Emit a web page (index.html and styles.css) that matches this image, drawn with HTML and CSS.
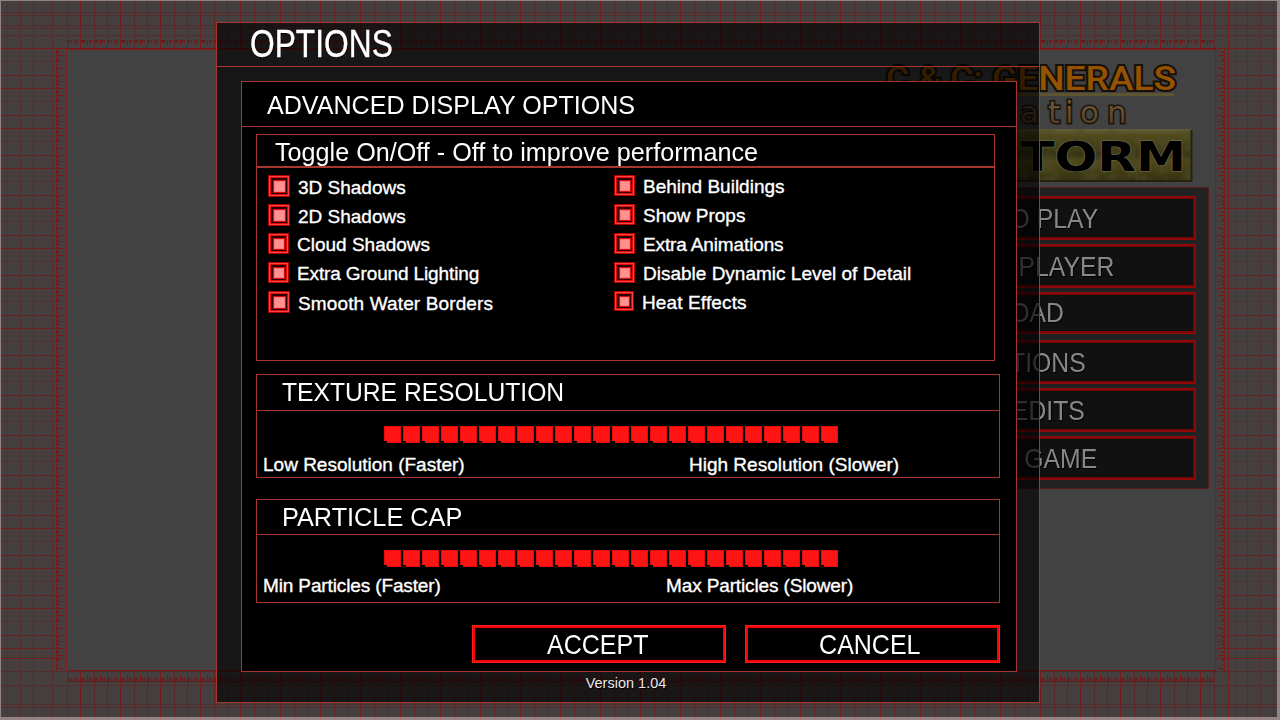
FILE: index.html
```
<!DOCTYPE html>
<html lang="en">
<head>
<meta charset="utf-8">
<title>Options</title>
<link rel="stylesheet" href="styles.css">
</head>
<body>
<svg class="backdrop" width="1280" height="720" viewBox="0 0 1280 720" shape-rendering="crispEdges">
  <defs>
    <pattern id="cols" x="80" y="0" width="40" height="720" patternUnits="userSpaceOnUse">
      <rect width="1" height="720" fill="#741b1b"/><rect x="14" width="1" height="720" fill="#572828"/><rect x="27" width="1" height="720" fill="#5a2828"/>
    </pattern>
    <pattern id="rows" x="0" y="48" width="1280" height="40" patternUnits="userSpaceOnUse">
      <rect width="1280" height="1" fill="#741b1b"/><rect y="13" width="1280" height="1" fill="#4f3232"/><rect y="27" width="1280" height="1" fill="#642424"/>
    </pattern>
    <pattern id="hticks" x="60" y="0" width="40" height="8" patternUnits="userSpaceOnUse">
      <path d="M1 0h2v3h-2zM4 0h1v3h-1zM8 0h2v3h-2zM11 0h1v3h-1zM14 0h1v5h-1zM16 0h2v3h-2zM21 0h4v3h-4zM27 0h1v5h-1zM29 0h2v3h-2zM32 0h1v3h-1zM35 0h3v3h-3z" fill="#602020"/>
      <rect x="0" width="1" height="6" fill="#8a1010"/>
    </pattern>
    <pattern id="vticks" x="0" y="68" width="8" height="40" patternUnits="userSpaceOnUse">
      <path d="M0 0h7v1H0zM0 4h3v1H0zM0 8h3v2H0zM0 12h2v1H0zM0 15h3v2H0zM0 19h3v1H0zM0 23h3v2H0zM0 27h7v1H0zM0 31h3v2H0zM0 36h3v1H0z" fill="#731818"/>
      <rect y="13" width="7" height="1" fill="#562525"/>
    </pattern>
    <linearGradient id="stone" x2="0" y2="1"><stop stop-color="#66613f"/><stop offset=".12" stop-color="#504b19"/><stop offset=".48" stop-color="#373414"/><stop offset=".6" stop-color="#4d4818"/><stop offset="1" stop-color="#333010"/></linearGradient>
    <linearGradient id="bronze" x2="0" y2="1"><stop stop-color="#7b6040"/><stop offset="1" stop-color="#4e381d"/></linearGradient>
    <filter id="grain" x="0" y="0" width="1" height="1"><feTurbulence type="fractalNoise" baseFrequency=".07" numOctaves="3" seed="4"/><feColorMatrix values="0 0 0 0 .08  0 0 0 0 .07  0 0 0 0 .02  1.8 0 0 0 -.7"/></filter>
  </defs>
  <rect width="1280" height="720" fill="#463f3f"/>
  <rect x="67" width="1148" height="720" fill="url(#cols)"/>
  <g fill="#463f3f"><rect y="48" width="67" height="672"/><rect x="1215" y="48" width="65" height="672"/></g>
  <g><rect y="48" width="67" height="601" fill="url(#rows)"/><rect x="1215" y="48" width="65" height="601" fill="url(#rows)"/></g>
  <g fill="#542c2c">
    <rect y="12" width="1280" height="1"/><rect y="15" width="1280" height="1"/><rect y="25" width="1280" height="1"/><rect y="28" width="1280" height="1"/><rect y="35" width="1280" height="1"/>
    <rect y="671" width="1280" height="1"/><rect y="685" width="1280" height="1"/><rect y="704" width="1280" height="1"/><rect y="707" width="1280" height="1"/>
    <rect x="7" width="1" height="720" opacity=".5"/><rect x="20" width="1" height="720"/><rect x="33" width="1" height="720"/><rect x="46" width="1" height="720" opacity=".3"/><rect x="52" width="1" height="720"/><rect x="67" width="1" height="48"/><rect x="67" y="672" width="1" height="48"/>
    <rect x="1235" width="1" height="720" opacity=".6"/><rect x="1247" width="1" height="720" opacity=".6"/><rect x="1260" width="1" height="720"/><rect x="1273" width="1" height="720"/>
  </g>
  <g fill="#781b1b"><rect x="1228" width="1" height="720"/><rect y="658" width="67" height="1"/><rect x="1215" y="658" width="65" height="1"/><rect y="48" width="1280" height="1"/></g>
  <rect x="67" y="39" width="1147" height="6" fill="url(#hticks)"/>
  <g transform="matrix(1 0 0 -1 0 681)"><rect x="67" width="1147" height="6" fill="url(#hticks)"/></g>
  <rect x="67" y="681" width="1147" height="1" fill="#641d1d"/>
  <g transform="translate(56)"><rect y="49" width="7" height="622" fill="url(#vticks)"/><rect y="49" width="1" height="622" fill="#741b1b"/></g>
  <g transform="matrix(-1 0 0 1 1225 0)"><rect y="49" width="7" height="622" fill="url(#vticks)"/><rect y="49" width="1" height="622" fill="#741b1b"/></g>
  <rect x="66" y="48" width="1150" height="623" fill="#424242"/>
  <path d="M66.5 670.5V49.500H1215.500V670.500" fill="none" stroke="#7b2020"/>
  <path d="M66 48.500H1216M67 670.500H1215" stroke="#781414"/>
  <path d="M0 0H1280V720H0ZM1 1V717H1277V1Z" fill="#ffdede" opacity=".43" fill-rule="evenodd"/>

  <g class="logo" shape-rendering="auto">
    <text class="logo-generals" x="886" y="90" textLength="97" lengthAdjust="spacingAndGlyphs">C &amp; C:</text>
    <text class="logo-generals" x="992" y="90" textLength="184" lengthAdjust="spacingAndGlyphs">GENERALS</text>
    <rect x="880" y="93" width="294" height="3" fill="#5c5530"/>
    <text class="logo-sub" x="1020 1048 1065 1080 1107" y="123">ation</text>
    <rect x="872" y="129" width="320" height="53" fill="url(#stone)"/>
    <rect x="872" y="129" width="320" height="53" filter="url(#grain)"/>
    <path d="M872 181H1191.500V130" fill="none" stroke="#25220d" stroke-width="2"/>
    <text class="logo-storm" x="984" y="171" textLength="202" lengthAdjust="spacingAndGlyphs">STORM</text>
  </g>
</svg>

<nav class="menu">
  <a><span>SOLO PLAY</span></a>
  <a><span>MULTIPLAYER</span></a>
  <a class="short"><span>LOAD</span></a>
  <a><span>OPTIONS</span></a>
  <a><span>CREDITS</span></a>
  <a><span>EXIT GAME</span></a>
</nav>

<main class="dialog">
  <h1><span>OPTIONS</span></h1>
  <section class="advanced">
    <h2><span>ADVANCED DISPLAY OPTIONS</span></h2>
    <div class="content">
      <section class="panel toggles">
        <h3><span>Toggle On/Off - Off to improve performance</span></h3>
        <div class="columns">
          <ul>
            <li><i class="check big"></i><span class="low in">3D Shadows</span></li>
            <li><i class="check big"></i><span class="low in">2D Shadows</span></li>
            <li><i class="check"></i><span>Cloud Shadows</span></li>
            <li><i class="check"></i><span class="tight">Extra Ground Lighting</span></li>
            <li><i class="check big"></i><span class="low loose">Smooth Water Borders</span></li>
          </ul>
          <ul>
            <li><i class="check"></i><span>Behind Buildings</span></li>
            <li><i class="check"></i><span>Show Props</span></li>
            <li><i class="check"></i><span class="tight">Extra Animations</span></li>
            <li><i class="check"></i><span>Disable Dynamic Level of Detail</span></li>
            <li><i class="check small"></i><span class="loose">Heat Effects</span></li>
          </ul>
        </div>
      </section>
      <section class="panel texture">
        <h3><span>TEXTURE RESOLUTION</span></h3>
        <div class="slider"><i></i><i></i><i></i><i></i><i></i><i></i><i></i><i></i><i></i><i></i><i></i><i></i><i></i><i></i><i></i><i></i><i></i><i></i><i></i><i></i><i></i><i></i><i></i><i></i></div>
        <div class="range"><span>Low Resolution (Faster)</span><span>High Resolution (Slower)</span></div>
      </section>
      <section class="panel particles">
        <h3><span>PARTICLE CAP</span></h3>
        <div class="slider"><i></i><i></i><i></i><i></i><i></i><i></i><i></i><i></i><i></i><i></i><i></i><i></i><i></i><i></i><i></i><i></i><i></i><i></i><i></i><i></i><i></i><i></i><i></i><i></i></div>
        <div class="range"><span class="tight">Min Particles (Faster)</span><span class="tight">Max Particles (Slower)</span></div>
      </section>
      <div class="actions"><button><span>ACCEPT</span></button><button><span>CANCEL</span></button></div>
    </div>
  </section>
  <footer>Version 1.04</footer>
</main>
</body>
</html>
```
FILE: styles.css
```
* { box-sizing: border-box; margin: 0; padding: 0; }
body { position: relative; width: 1280px; height: 720px; overflow: hidden; background: #424242; color: #fff; font-family: "Liberation Sans", Arial, sans-serif; }
span { display: inline-block; white-space: nowrap; }
h1, h2, h3 { font-weight: 400; }
h1 span, h2 span, h3 span { transform-origin: left center; }
.backdrop { display: block; }

.logo-generals { font: 500 34px Roboto, sans-serif; fill: #955200; stroke: #15110a; stroke-width: 4px; paint-order: stroke; }
.logo-sub { font: 400 31px "DejaVu Sans", sans-serif; fill: url(#bronze); stroke: #17130d; stroke-width: 3px; paint-order: stroke; }
.logo-storm { font: 700 41px "DejaVu Sans", sans-serif; fill: #000; stroke: #77755f; stroke-width: 1px; paint-order: stroke; }

.menu { position: absolute; left: 859px; top: 187px; width: 350px; height: 302px; padding: 8px 12px; display: flex; flex-direction: column; gap: 4px; background: #222; border: 1px solid #541b19; }
.menu a { height: 44px; flex: none; padding-right: 8px; border: 3px solid #7c0505; outline: 1px solid #930b0b; outline-offset: -1px; background: #111; color: #888; font-size: 28px; line-height: 39px; text-align: center; text-shadow: 1px 1px #000; }
.menu a.short { height: 42px; line-height: 36px; margin-bottom: 2px; }
.menu span { transform: scaleX(.885); }

.dialog { position: absolute; left: 216px; top: 22px; width: 824px; height: 681px; border: 1px solid #a8352f; background: rgba(0, 0, 0, .65); }
.dialog h1 { height: 44px; padding-left: 33px; border-bottom: 1px solid #a8352f; font-size: 38px; line-height: 43px; text-shadow: 1px 1px #000; -webkit-text-stroke: .4px #fff; }
.dialog h1 span { transform: scaleX(.835); }
.advanced { width: 776px; height: 591px; margin: 14px 0 0 24px; border: 1px solid #a8352f; background: #000; }
.advanced h2 { height: 45px; padding-left: 25px; border-bottom: 1px solid #a8352f; font-size: 26px; line-height: 47px; }
.advanced h2 span { transform: scaleX(.965); }
.content { padding: 7px 16px 0 14px; }
.panel { width: 744px; border: 1px solid #a8352f; }
.panel h3 { border-bottom: 1px solid #a8352f; font-size: 26px; }

.toggles { width: 739px; height: 227px; }
.toggles h3 { height: 33px; padding-left: 18px; border-bottom-width: 2px; line-height: 34px; }
.toggles h3 span { transform: scaleX(.968); }
.columns { display: grid; grid-template-columns: 346px 1fr; padding: 7px 0 0 11px; }
ul { list-style: none; }
li { display: flex; height: 29px; gap: 8px; font-size: 19px; line-height: 23px; }
li span, .range span { -webkit-text-stroke: .35px #fff; }
li .low { padding-top: 1px; }
.tight { letter-spacing: -.13px; }
.loose { letter-spacing: .13px; }
.check { display: block; flex: none; position: relative; width: 21px; height: 21px; border: solid #300000; border-width: 5px 4px 4px 5px; background: #ff9191; }
.check::before { content: ""; position: absolute; inset: -5px -4px -4px -5px; border: 1px solid #b00000; box-shadow: inset 0 0 0 1px #ff4444, inset 0 0 0 2px #df0a0a; }
.check::after { content: ""; position: absolute; inset: 0; border: 1px solid #dc0808; box-shadow: inset 0 0 0 1px #ff7d7d; }
.check.big { width: 22px; height: 22px; }
.check.small { width: 20px; height: 20px; }

.texture { height: 104px; margin-top: 13px; }
.texture h3 { height: 36px; padding-left: 25px; line-height: 35px; }
.texture h3 span { transform: scaleX(.948); }
.particles { height: 104px; margin-top: 21px; }
.particles h3 { height: 35px; padding-left: 25px; line-height: 34px; }
.particles h3 span { transform: scaleX(.972); }
.slider { display: flex; gap: 2px; padding: 15px 0 0 127px; }
.slider i { width: 17px; height: 17px; background: #ff1414; border: 1px solid #e80b0b; clip-path: polygon(0 0, 100% 0, 100% 100%, 3px 100%, 3px 15px, 0 15px); }
.range { display: grid; grid-template-columns: 426px 1fr; padding: 11px 0 0 6px; font-size: 19px; line-height: 22px; }
.particles .range { grid-template-columns: 403px 1fr; padding-top: 8px; }
.actions { display: flex; gap: 19px; margin: 22px 0 0 216px; }
button { width: 254px; height: 38px; padding-right: 3px; border: 3px solid #f50505; outline: 1px solid #ff1c1c; outline-offset: -1px; background: #000; color: #fff; font: 28px/33px "Liberation Sans", Arial, sans-serif; }
button + button { width: 255px; padding-right: 5px; }
button span { transform: scaleX(.893); }
footer { width: 818px; margin-top: 3px; font-size: 14.500px; line-height: 17px; text-align: center; color: #e8e8e8; text-shadow: 1px 1px #000; }
```
